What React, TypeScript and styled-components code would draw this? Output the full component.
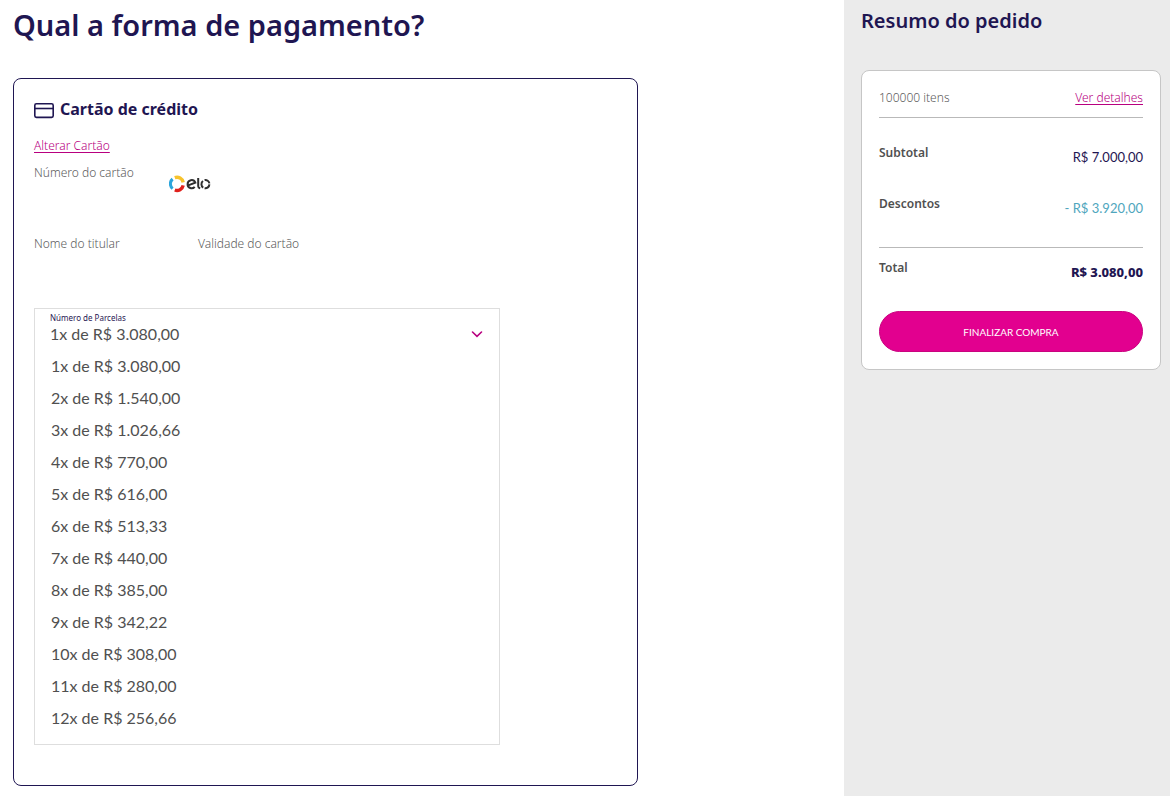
import React, { useState } from "react";
import styled, { createGlobalStyle } from "styled-components";

const colors = {
  navy: "#1f1652",
  pink: "#e2008f",
  link: "#b8007f",
  text: "#505050",
  muted: "#5c5c5c",
  teal: "#4fa6bd",
  line: "#b9b9b9",
};

const textFont = `"Noto Sans", "Open Sans", sans-serif`;
const numberFont = `Lato, "Noto Sans", sans-serif`;

const GlobalStyle = createGlobalStyle`
  * { box-sizing: border-box; }
  body {
    margin: 0;
    background: #fff;
    color: ${colors.text};
    font: 300 12px/20px ${textFont};
  }
  h1, h2, p, ul, dl, dd { margin: 0; padding: 0; }
  button, select { font: inherit; color: inherit; }
`;

const Page = styled.div`
  display: grid;
  grid-template-columns: minmax(0, 844fr) minmax(300px, 326fr);
  min-height: 100vh;
`;

const Main = styled.main`
  padding: 0 13px 10px;
`;

const Title = styled.h1`
  margin-bottom: 28px;
  font-size: 29px;
  line-height: 50px;
  font-weight: 600;
  color: ${colors.navy};
`;

const PaymentCard = styled.section`
  max-width: 625px;
  padding: 18px 20px 40px;
  border: 1px solid ${colors.navy};
  border-radius: 8px;
`;

const CardHeading = styled.h2`
  display: flex;
  align-items: center;
  gap: 6px;
  margin-bottom: 15px;
  font-size: 16px;
  line-height: 24px;
  font-weight: 700;
  color: ${colors.navy};
`;

const Link = styled.a`
  color: ${colors.link};
  text-decoration: underline;
  text-underline-offset: 2px;
`;

const CardFields = styled.dl`
  display: grid;
  grid-template-columns: 164px 1fr;
  row-gap: 51px;
  margin: 7px 0 54px;
  color: ${colors.muted};
`;

const NumberField = styled.div`
  display: grid;
  grid-column: 1 / -1;
  grid-template-columns: 135px 1fr;
`;

const Brand = styled.dd`
  height: 20px;
  padding-top: 12px;
`;

const Installments = styled.div`
  max-width: 466px;
  padding-bottom: 10px;
  border: 1px solid #dedede;
`;

const InstallmentsLabel = styled.label`
  display: block;
  padding: 3px 15px 0;
  font-size: 8px;
  line-height: 12px;
  font-weight: 400;
  color: ${colors.navy};
`;

const SelectRow = styled.div`
  display: grid;
  align-items: center;
  padding: 0 15px;

  > * { grid-area: 1 / 1; }
  > svg { justify-self: end; pointer-events: none; }
`;

const Select = styled.select`
  width: 100%;
  height: 20px;
  padding: 0;
  border: 0;
  background: transparent;
  appearance: none;
  font: 400 16px/20px ${numberFont};
  cursor: pointer;
`;

const OptionList = styled.ul`
  margin-top: 6px;
  list-style: none;
`;

const OptionButton = styled.button`
  display: block;
  width: 100%;
  padding: 0 16px;
  border: 0;
  background: transparent;
  font: 400 16px/32px ${numberFont};
  text-align: left;
  cursor: pointer;

  &:hover { background: #f5f5f5; }
`;

const Summary = styled.aside`
  padding: 0 9px 0 17px;
  background: #ebebeb;
`;

const SummaryTitle = styled.h2`
  margin-bottom: 28px;
  font-size: 20px;
  line-height: 42px;
  font-weight: 600;
  color: ${colors.navy};
`;

const SummaryCard = styled.section`
  padding: 17px;
  border: 1px solid #c6c6c6;
  border-radius: 8px;
  background: #fff;
`;

const ItemsRow = styled.div`
  display: flex;
  justify-content: space-between;
  padding-bottom: 9px;
  border-bottom: 1px solid ${colors.line};
  color: ${colors.muted};
`;

const Totals = styled.dl`
  display: flex;
  flex-direction: column;
`;

const TotalRow = styled.div<{ $divided?: boolean }>`
  display: flex;
  justify-content: space-between;
  padding: ${(p) => (p.$divided ? "10px 0 29px" : "25px 0 2px")};
  margin-top: ${(p) => (p.$divided ? "27px" : "0")};
  border-top: ${(p) => (p.$divided ? `1px solid ${colors.line}` : "0")};
`;

const TotalName = styled.dt`
  font-weight: 600;
`;

const Amount = styled.dd<{ $tone?: "discount" | "total" }>`
  padding-top: 4px;
  font-family: ${(p) => (p.$tone === "total" ? textFont : numberFont)};
  font-size: 13px;
  font-weight: ${(p) => (p.$tone === "total" ? 800 : 400)};
  color: ${(p) => (p.$tone === "discount" ? colors.teal : colors.navy)};
`;

const SubmitButton = styled.button`
  display: block;
  width: 100%;
  height: 41px;
  border: 1px solid #c9047f;
  border-radius: 21px;
  background: ${colors.pink};
  color: #fff;
  font: 400 10px/20px ${numberFont};
  cursor: pointer;
`;

const CreditCardIcon = () => (
  <svg width="20" height="20" viewBox="0 0 20 20" fill="none" stroke={colors.navy} strokeWidth="1.6" aria-hidden="true">
    <rect x="0.8" y="4.8" width="18.4" height="13.6" rx="1.6" />
    <path d="M1 9.5h18" />
  </svg>
);

const ChevronIcon = () => (
  <svg width="14" height="10" viewBox="0 0 14 10" fill="none" stroke={colors.link} strokeWidth="1.6" strokeLinecap="round" aria-hidden="true">
    <path d="M2.5 3 7 7.3 11.5 3" />
  </svg>
);

const EloLogo = () => (
  <svg width="42" height="18" viewBox="0 0 42 18" fill="none" role="img" aria-label="elo">
    <g strokeWidth="3.4">
      <path d="M5.8 2.7A6.3 6.3 0 0 1 14.2 7.4" stroke="#f7c32c" />
      <path d="M3.6 13.6A6.3 6.3 0 0 1 3.6 4" stroke="#2aa5dc" strokeWidth="3" />
      <path d="M14.2 10.4A6.3 6.3 0 0 1 5.8 15" stroke="#e0201b" />
    </g>
    <g stroke="#2e2e2e" strokeWidth="2">
      <path d="M18.5 10.6 26.3 7.6A4 4 0 0 0 18.6 9.2 4 4 0 0 0 25.7 11.8" />
      <path d="M29.2 3V11.2Q29.2 12.8 31.2 13.3" />
      <path d="M34.2 12.6A4.1 4.1 0 0 1 34 6" />
      <path d="M35.6 5.1A4.1 4.1 0 0 1 40.4 8.4" />
      <path d="M40.4 9.4A4.1 4.1 0 0 1 35.6 13.2" />
    </g>
  </svg>
);

const installments = [
  "1x de R$ 3.080,00",
  "2x de R$ 1.540,00",
  "3x de R$ 1.026,66",
  "4x de R$ 770,00",
  "5x de R$ 616,00",
  "6x de R$ 513,33",
  "7x de R$ 440,00",
  "8x de R$ 385,00",
  "9x de R$ 342,22",
  "10x de R$ 308,00",
  "11x de R$ 280,00",
  "12x de R$ 256,66",
];

export default function App() {
  const [selected, setSelected] = useState(installments[0]);

  return (
    <>
      <GlobalStyle />
      <Page>
        <Main>
          <Title>Qual a forma de pagamento?</Title>
          <PaymentCard>
            <CardHeading>
              <CreditCardIcon />
              Cartão de crédito
            </CardHeading>
            <Link href="#alterar">Alterar Cartão</Link>
            <CardFields>
              <NumberField>
                <dt>Número do cartão</dt>
                <Brand>
                  <EloLogo />
                </Brand>
              </NumberField>
              <dt>Nome do titular</dt>
              <dt>Validade do cartão</dt>
            </CardFields>
            <Installments>
              <InstallmentsLabel htmlFor="parcelas">Número de Parcelas</InstallmentsLabel>
              <SelectRow>
                <Select id="parcelas" value={selected} onChange={(e) => setSelected(e.target.value)}>
                  {installments.map((option) => (
                    <option key={option}>{option}</option>
                  ))}
                </Select>
                <ChevronIcon />
              </SelectRow>
              <OptionList>
                {installments.map((option) => (
                  <li key={option}>
                    <OptionButton type="button" onClick={() => setSelected(option)}>
                      {option}
                    </OptionButton>
                  </li>
                ))}
              </OptionList>
            </Installments>
          </PaymentCard>
        </Main>
        <Summary>
          <SummaryTitle>Resumo do pedido</SummaryTitle>
          <SummaryCard>
            <ItemsRow>
              <span>100000 itens</span>
              <Link href="#detalhes">Ver detalhes</Link>
            </ItemsRow>
            <Totals>
              <TotalRow>
                <TotalName>Subtotal</TotalName>
                <Amount>R$ 7.000,00</Amount>
              </TotalRow>
              <TotalRow>
                <TotalName>Descontos</TotalName>
                <Amount $tone="discount">- R$ 3.920,00</Amount>
              </TotalRow>
              <TotalRow $divided>
                <TotalName>Total</TotalName>
                <Amount $tone="total">R$ 3.080,00</Amount>
              </TotalRow>
            </Totals>
            <SubmitButton type="button">FINALIZAR COMPRA</SubmitButton>
          </SummaryCard>
        </Summary>
      </Page>
    </>
  );
}
